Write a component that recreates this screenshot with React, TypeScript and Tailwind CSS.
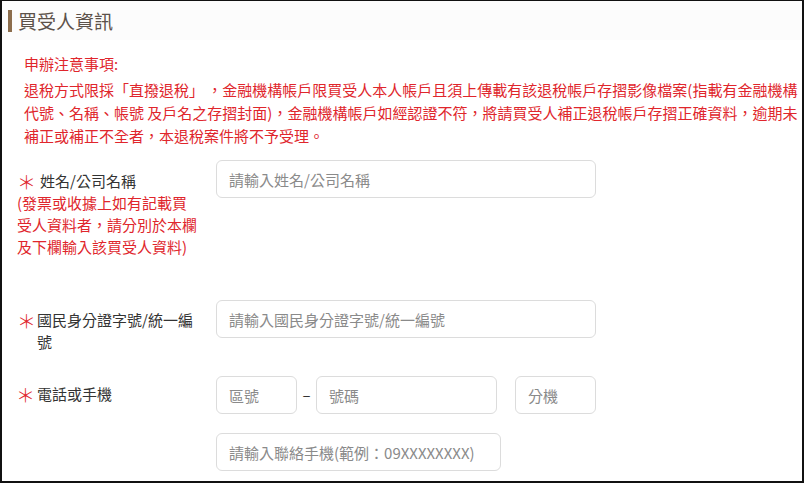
const font = "font-['Noto_Sans_CJK_TC','Noto_Sans',sans-serif]"

function Field({ placeholder, className }: { placeholder: string; className: string }) {
  return (
    <input
      placeholder={placeholder}
      className={
        "h-[38px] rounded-[6px] border border-[#dcdcdc] bg-white px-[12px] text-[15px] text-[#333] outline-none placeholder:text-[#8a8a8a] " +
        className
      }
    />
  )
}

function Star() {
  return (
    <span className="flex h-[22px] items-center text-[19px] leading-none font-light text-[#e0262c]">
      ＊
    </span>
  )
}

export default function App() {
  return (
    <div className={"w-[804px] h-[483px] overflow-hidden bg-white border-t border-l-2 border-r-2 border-b-2 border-[#111] " + font}>
      <div className="flex h-[39px] items-center bg-[#fcfcfc] pl-[6px]">
        <div className="h-[22px] w-[4px] bg-[#8c6d4c]" />
        <h2 className="ml-[6px] text-[19px] leading-[22px] text-[#5c524a]">買受人資訊</h2>
      </div>

      <div className="mt-[12px] pl-[22px] text-[15px] leading-[23px] text-[#e0262c]">
        <div>申辦注意事項:</div>
        <p className="mt-[3px] whitespace-nowrap">
          退稅方式限採「直撥退稅」 ，金融機構帳戶限買受人本人帳戶且須上傳載有該退稅帳戶存摺影像檔案(指載有金融機構
          <br />
          代號、名稱、帳號 及戶名之存摺封面)，金融機構帳戶如經認證不符，將請買受人補正退稅帳戶存摺正確資料，逾期未
          <br />
          補正或補正不全者，本退稅案件將不予受理。
        </p>
      </div>

      <div className="mt-[13px] flex">
        <div className="w-[214px] shrink-0 pl-[15px] pt-[10px] text-[15px] leading-[22px]">
          <div className="flex text-[#333]">
            <Star />
            <span className="ml-[4px]">姓名/公司名稱</span>
          </div>
          <div className="text-[#e0262c]">
            <div>(發票或收據上如有記載買</div>
            <div>受人資料者，請分別於本欄</div>
            <div>及下欄輸入該買受人資料)</div>
          </div>
        </div>
        <Field placeholder="請輸入姓名/公司名稱" className="w-[380px]" />
      </div>

      <div className="mt-[42px] flex">
        <div className="flex w-[214px] shrink-0 pl-[15px] pt-[9px] text-[15px] leading-[22px] text-[#333]">
          <Star />
          <span className="ml-[1px] w-[158px]">國民身分證字號/統一編號</span>
        </div>
        <Field placeholder="請輸入國民身分證字號/統一編號" className="w-[380px]" />
      </div>

      <div className="mt-[23px] flex">
        <div className="flex w-[214px] shrink-0 pl-[14px] pt-[7px] text-[15px] leading-[22px] text-[#333]">
          <Star />
          <span className="ml-[2px]">電話或手機</span>
        </div>
        <div className="flex flex-col gap-[19px]">
          <div className="flex items-center">
            <Field placeholder="區號" className="w-[81px]" />
            <span className="w-[19px] text-center text-[15px] text-[#333]">–</span>
            <Field placeholder="號碼" className="w-[181px]" />
            <Field placeholder="分機" className="ml-[18px] w-[81px]" />
          </div>
          <Field placeholder="請輸入聯絡手機(範例：09XXXXXXXX)" className="w-[285px]" />
        </div>
      </div>
    </div>
  )
}
